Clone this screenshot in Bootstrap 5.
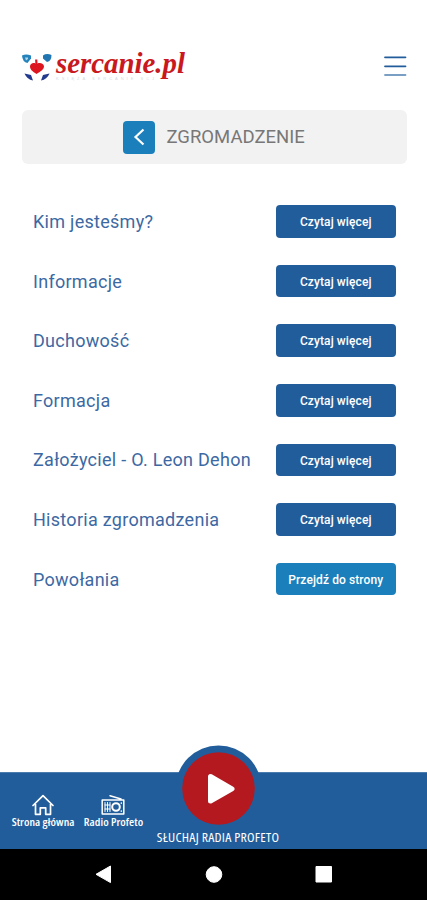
<!DOCTYPE html>
<html lang="pl">
<head>
<meta charset="utf-8">
<meta name="viewport" content="width=device-width, initial-scale=1">
<title>Sercanie.pl – Zgromadzenie</title>
<link rel="stylesheet" href="https://cdn.jsdelivr.net/npm/bootstrap@5.3.0/dist/css/bootstrap.min.css">
<style>
:root { --navy: #225d9b; --azure: #1b7fbb; }
body { font-family: Roboto, "Liberation Sans", sans-serif; background: #fff; }
.screen { width: 427px; height: 900px; }
.top-bar { height: 110px; padding: 46px 20px 0 20px; }
.page-head { height: 54px; margin: 0 20.5px 0 21.5px; background: #f2f2f2; border-radius: 6px; padding-left: 101.5px; }
.back-btn { width: 32px; height: 33px; background: var(--azure); border-radius: 4px; }
.page-title { font-size: 18.5px; font-weight: 400; color: #777; letter-spacing: 0; margin-left: 11.5px; padding-top: 1px; }
.menu-list { padding: 27.7px 31.5px 0 33px; }
.menu-row { height: 59.6px; }
.menu-name { font-size: 18px; color: #3c69a3; letter-spacing: .28px; white-space: nowrap; }
.menu-btn { width: 119.5px; height: 32.5px; border-radius: 4px; background: var(--navy); color: #fff; font-size: 12px; font-weight: 500; padding: 1px 0 0; line-height: 32px; border: 0; letter-spacing: .1px; }
.menu-btn-site { background: var(--azure); }
.tab-bar { height: 77px; background: var(--navy); border-top: 1px solid #4a7caf; font-family: "Open Sans", "Noto Sans", sans-serif; color: #fff; }
.tab-link { color: #fff; font-size: 10.5px; font-weight: 600; font-stretch: 75%; line-height: 12px; white-space: nowrap; text-decoration: none; letter-spacing: .05px; }
.tab-link span { transform: scaleX(1.12); }
.tab-home { width: 86px; padding-top: 21px; }
.tab-radio { width: 54px; padding-top: 21px; }
.play-ring { left: 174.5px; top: -28px; width: 87px; height: 87px; }
.listen { left: 137.5px; width: 160px; top: 57px; font-size: 12px; line-height: 15px; font-weight: 500; font-stretch: 75%; letter-spacing: .2px; white-space: nowrap; transform: scaleX(1.15); }
.sys-bar { height: 51px; background: #000; }
</style>
<script src="https://cdn.jsdelivr.net/npm/bootstrap@5.3.0/dist/js/bootstrap.bundle.min.js"></script>
</head>
<body>
<div class="screen d-flex flex-column overflow-hidden">
  <header class="top-bar d-flex justify-content-between align-items-start">
    <svg width="170" height="42" viewBox="20 46 170 42" role="img" aria-label="sercanie.pl">
      <path d="M22 55.500q4-2 9 0v3l-3.500 4.500q-5-1-5.500-7.500z" fill="#2583bb"/>
      <path d="M25 57.500h3v1.500l-2 1.500z" fill="#b5d7ea"/>
      <path d="M51.500 55q-5-2-8.500 .5v3l4 3.500q4.500-1 4.500-7z" fill="#2176b2"/>
      <path d="M24.500 73.500l6.500 1.500 2 5.500q-6-1-8.500-7z" fill="#233b8e"/>
      <path d="M49.500 73.500l-6.500 1.500-2 5.500q6-1 8.500-7z" fill="#233b8e"/>
      <path d="M36.500 74c-4-2.500-6.500-4.500-6.500-7.500 0-3.500 4.500-4.500 6.500-2.200 2-2.300 7.500-1.300 7.500 2.200 0 3-3.500 5-7.500 7.500z" fill="#dd1520"/>
      <path d="M36.500 65l-.3-5.500" stroke="#dd1520" stroke-width="2.200"/>
      <text x="56" y="73" textLength="129" lengthAdjust="spacingAndGlyphs" font-family="Liberation Serif, serif" font-size="29" font-style="italic" font-weight="700" fill="#c91820">sercanie.pl</text>
      <text x="56" y="79.800" textLength="98" font-family="Liberation Sans, sans-serif" font-size="4" fill="#d4d9df">KSIĘŻA SERCANIE SCJ</text>
    </svg>
    <svg width="24" height="40" viewBox="383 46 24 40" fill="none" stroke-linecap="round" stroke-width="1.800" aria-label="Menu">
      <path d="M385 57.300h20.500M385 66.300h20.500" stroke="#225d9b"/><path d="M385 75h20.500" stroke="#7a9fc5"/>
    </svg>
  </header>
  <div class="page-head d-flex align-items-center">
    <a href="#" class="back-btn d-flex align-items-center justify-content-center" aria-label="Wstecz">
      <svg width="12" height="18" viewBox="0 0 12 18" fill="none" stroke="#fff" stroke-width="2.200"><path d="M10.500 1.500L2.500 9l8 7.500"/></svg>
    </a>
    <h1 class="page-title mb-0">ZGROMADZENIE</h1>
  </div>
  <main class="menu-list flex-grow-1">
    <div class="menu-row d-flex align-items-center justify-content-between"><span class="menu-name">Kim jesteśmy?</span><a href="#" class="btn menu-btn">Czytaj więcej</a></div>
    <div class="menu-row d-flex align-items-center justify-content-between"><span class="menu-name">Informacje</span><a href="#" class="btn menu-btn">Czytaj więcej</a></div>
    <div class="menu-row d-flex align-items-center justify-content-between"><span class="menu-name">Duchowość</span><a href="#" class="btn menu-btn">Czytaj więcej</a></div>
    <div class="menu-row d-flex align-items-center justify-content-between"><span class="menu-name">Formacja</span><a href="#" class="btn menu-btn">Czytaj więcej</a></div>
    <div class="menu-row d-flex align-items-center justify-content-between"><span class="menu-name">Założyciel - O. Leon Dehon</span><a href="#" class="btn menu-btn">Czytaj więcej</a></div>
    <div class="menu-row d-flex align-items-center justify-content-between"><span class="menu-name">Historia zgromadzenia</span><a href="#" class="btn menu-btn">Czytaj więcej</a></div>
    <div class="menu-row d-flex align-items-center justify-content-between"><span class="menu-name">Powołania</span><a href="#" class="btn menu-btn menu-btn-site">Przejdź do strony</a></div>
  </main>
  <nav class="tab-bar position-relative flex-shrink-0 d-flex">
    <a href="#" class="tab-link tab-home d-flex flex-column align-items-center">
      <svg width="24" height="22" viewBox="0 0 24 22" fill="none" stroke="#fff" stroke-width="1.700" stroke-linejoin="round" stroke-linecap="round"><path d="M2 11.500L12 1.700l10 9.800M4.500 10v10.300h4.800v-6.500h5.400v6.500h4.800V10"/></svg>
      <span>Strona główna</span>
    </a>
    <a href="#" class="tab-link tab-radio d-flex flex-column align-items-center">
      <svg width="24" height="22" viewBox="0 0 24 22" fill="none" stroke="#fff" stroke-width="1.500" stroke-linecap="round" stroke-linejoin="round"><path d="M1.200 6h21.600v14H1.200zM20 5L9 1.700"/><path d="M4 8.500v9M6.500 8.500v9M9 8.500v9M4 11h5M4 15h5" stroke-width="1"/><circle cx="15" cy="13" r="3.800" stroke-width="2"/><path d="M20.300 9v.2M20.300 17v.2"/></svg>
      <span>Radio Profeto</span>
    </a>
    <div class="play-ring position-absolute">
      <svg class="d-block" width="87" height="87" viewBox="0 0 87 87" role="img" aria-label="Odtwórz"><circle cx="43.500" cy="43.500" r="43" fill="#225d9b"/><circle cx="43.500" cy="43.500" r="36.300" fill="#b4191f"/><path d="M35.500 31.500v24.500l21.500-12.200z" fill="#fff" stroke="#fff" stroke-width="5" stroke-linejoin="round"/></svg>
    </div>
    <div class="listen position-absolute text-center">SŁUCHAJ RADIA PROFETO</div>
  </nav>
  <footer class="sys-bar flex-shrink-0">
    <svg width="427" height="51" viewBox="0 849 427 51" fill="#fff" stroke="#fff" stroke-linejoin="round"><path d="M96 874.300l14.500-8.300v16.600z" stroke-width="1"/><circle cx="214" cy="874.500" r="7.800"/><rect x="316" y="866.500" width="15.500" height="15.500"/></svg>
  </footer>
</div>
</body>
</html>
